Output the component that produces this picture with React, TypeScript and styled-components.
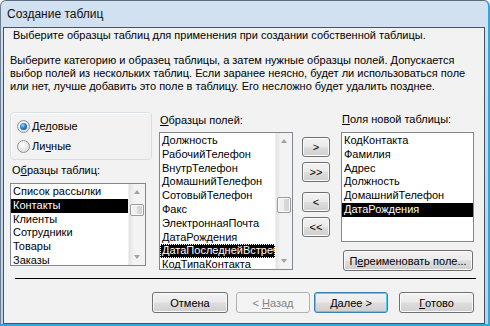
import React from 'react';
import styled, { createGlobalStyle, css } from 'styled-components';

const GlobalStyle = createGlobalStyle`
  html, body {
    margin: 0;
    padding: 0;
    background: #ffffff;
  }
  body {
    font-family: "Liberation Sans", Arial, sans-serif;
    font-size: 11px;
    color: #000;
  }
  * { box-sizing: border-box; }
`;

// Window chrome
const Window = styled.div`
  width: 490px;
  height: 326px;
  display: flex;
  flex-direction: column;
  background: linear-gradient(to bottom, #d3e2f2 0%, #c4d8ee 45%, #b9d1ea 100%);
  border-top: 1px solid #5b6b7c;
  border-left: 1px solid #6e7d8d;
  border-right: 2px solid #2ea8dd;
  border-bottom: 2px solid #2ea8dd;
  border-top-left-radius: 6px;
  border-top-right-radius: 6px;
  padding: 0 3px 0 2px;
  overflow: hidden;
`;

const TitleBar = styled.div`
  height: 26px;
  display: flex;
  align-items: center;
  padding-left: 4px;
  font-size: 12px;
  color: #101010;
`;

const Client = styled.div`
  flex: 1;
  display: flex;
  flex-direction: column;
  background: #f2f2f2;
  border: 1px solid #46525e;
`;

const HeaderText = styled.div`
  padding: 1px 0 0 9px;
  line-height: 13px;
`;

const Description = styled.div`
  margin: 12px 0 0 6px;
  line-height: 13px;
`;

const MainRow = styled.div`
  display: flex;
  align-items: flex-start;
  margin-top: 19px;
  padding-left: 6px;
`;

const Column = styled.div<{ $w: number; $ml?: number }>`
  width: ${p => p.$w}px;
  margin-left: ${p => p.$ml || 0}px;
  display: flex;
  flex-direction: column;
`;

const GroupBox = styled.div`
  height: 48px;
  border: 1px solid #d5dfe5;
  border-radius: 4px;
  box-shadow: inset 1px 1px 0 #ffffff;
  display: flex;
  flex-direction: column;
  justify-content: center;
  gap: 7px;
  padding-left: 6px;
`;

const RadioRow = styled.div`
  display: flex;
  align-items: center;
  gap: 2px;
  line-height: 13px;
`;

const RadioCircle = styled.span<{ $checked?: boolean }>`
  width: 13px;
  height: 13px;
  border-radius: 50%;
  border: 1px solid #8f9194;
  background: radial-gradient(circle at 40% 35%, #ffffff 0%, #e8e8e8 55%, #cfd0d2 100%);
  display: flex;
  align-items: center;
  justify-content: center;
  ${p => p.$checked && css`
    &::after {
      content: '';
      width: 7px;
      height: 7px;
      border-radius: 50%;
      background: radial-gradient(circle at 40% 35%, #9fd8ff 0%, #2a7ec6 45%, #0d3f7e 100%);
    }
  `}
`;

const Label = styled.div<{ $mt?: number; $ml?: number }>`
  margin-top: ${p => p.$mt || 0}px;
  margin-left: ${p => p.$ml || 0}px;
  line-height: 13px;
`;

const ListBox = styled.div<{ $h: number; $w?: number; $mt?: number }>`
  height: ${p => p.$h}px;
  width: ${p => (p.$w ? `${p.$w}px` : 'auto')};
  margin-top: ${p => p.$mt || 0}px;
  border: 1px solid #828790;
  background: #ffffff;
  display: flex;
  overflow: hidden;
`;

const Items = styled.div`
  flex: 1;
  min-width: 0;
  padding-top: 1px;
  overflow: hidden;
`;

const Item = styled.div<{ $selected?: boolean; $focus?: boolean }>`
  height: 13.8px;
  line-height: 13.8px;
  padding-left: 2px;
  white-space: nowrap;
  overflow: hidden;
  ${p => p.$selected && css`
    background: #000000;
    color: #ffffff;
  `}
  ${p => p.$focus && css`
    outline: 1px dotted #ffffff;
    outline-offset: -1px;
  `}
`;

const ScrollBar = styled.div`
  width: 17px;
  flex-shrink: 0;
  background: linear-gradient(to right, #e3e3e3, #f3f3f3 30%, #f3f3f3);
  border-left: 1px solid #f0f0f0;
  display: flex;
  flex-direction: column;
  align-items: center;
`;

const Arrow = styled.div<{ $down?: boolean }>`
  height: 16px;
  width: 100%;
  display: flex;
  align-items: center;
  justify-content: center;
  &::after {
    content: '';
    border-left: 3.5px solid transparent;
    border-right: 3.5px solid transparent;
    ${p => p.$down
      ? css`border-top: 4px solid #a2a2a2;`
      : css`border-bottom: 4px solid #a2a2a2;`}
  }
`;

const Track = styled.div`
  flex: 1;
  width: 100%;
  padding: 0 1px;
`;

const Thumb = styled.div<{ $top: number; $h: number }>`
  margin-top: ${p => p.$top}px;
  height: ${p => p.$h}px;
  border: 1px solid #9a9a9a;
  border-radius: 2px;
  background: linear-gradient(to right, #f4f4f4 0%, #ececec 50%, #dcdcdc 50%, #d0d0d0 100%);
  box-shadow: inset 0 0 0 1px #fbfbfb;
`;

const Button = styled.div<{ $w: number; $h?: number; $mt?: number; $ml?: number; $default?: boolean; $disabled?: boolean }>`
  width: ${p => p.$w}px;
  height: ${p => p.$h || 21}px;
  margin-top: ${p => p.$mt || 0}px;
  margin-left: ${p => p.$ml || 0}px;
  border: 1px solid #707070;
  border-radius: 3px;
  background: linear-gradient(to bottom, #f2f2f2 0%, #ebebeb 48%, #dddddd 52%, #cfcfcf 100%);
  box-shadow: inset 0 0 0 1px #fbfbfb;
  display: flex;
  align-items: center;
  justify-content: center;
  flex-shrink: 0;
  white-space: pre;
  ${p => p.$default && css`
    border-color: #3c7fb1;
    box-shadow: inset 0 0 0 1px #4fd0f7;
  `}
  ${p => p.$disabled && css`
    border-color: #adb2b5;
    background: #f4f4f4;
    box-shadow: none;
    color: #838383;
  `}
`;

const ArrowColumn = styled.div`
  width: 28px;
  margin-left: 9px;
  margin-top: 25px;
  display: flex;
  flex-direction: column;
`;

const Separator = styled.div`
  height: 1px;
  background: #000000;
  margin: 7px 8px 0 11px;
`;

const ButtonRow = styled.div`
  display: flex;
  padding-left: 148px;
  margin-top: 13px;
`;

const tableSamples = ['Список рассылки', 'Контакты', 'Клиенты', 'Сотрудники', 'Товары', 'Заказы'];

const fieldSamples = [
  'Должность',
  'РабочийТелефон',
  'ВнутрТелефон',
  'ДомашнийТелефон',
  'СотовыйТелефон',
  'Факс',
  'ЭлектроннаяПочта',
  'ДатаРождения',
  'ДатаПоследнейВстречи',
  'КодТипаКонтакта',
];

const newFields = ['КодКонтакта', 'Фамилия', 'Адрес', 'Должность', 'ДомашнийТелефон', 'ДатаРождения'];

export default function App() {
  return (
    <>
      <GlobalStyle />
      <Window>
        <TitleBar>Создание таблиц</TitleBar>
        <Client>
          <HeaderText>Выберите образцы таблиц для применения при создании собственной таблицы.</HeaderText>
          <Description>
            Выберите категорию и образец таблицы, а затем нужные образцы полей. Допускается
            <br />
            выбор полей из нескольких таблиц. Если заранее неясно, будет ли использоваться поле
            <br />
            или нет, лучше добавить это поле в таблицу. Его несложно будет удалить позднее.
          </Description>

          <MainRow>
            <Column $w={142}>
              <GroupBox>
                <RadioRow>
                  <RadioCircle $checked />
                  <span>Де<u>л</u>овые</span>
                </RadioRow>
                <RadioRow>
                  <RadioCircle />
                  <span>Ли<u>ч</u>ные</span>
                </RadioRow>
              </GroupBox>
              <Label $mt={4} $ml={2}>О<u>б</u>разцы таблиц:</Label>
              <ListBox $h={83} $w={136} $mt={6}>
                <Items>
                  {tableSamples.map(t => (
                    <Item key={t} $selected={t === 'Контакты'}>{t}</Item>
                  ))}
                </Items>
                <ScrollBar>
                  <Arrow />
                  <Track>
                    <Thumb $top={4} $h={12} />
                  </Track>
                  <Arrow $down />
                </ScrollBar>
              </ListBox>
            </Column>

            <Column $w={134} $ml={7}>
              <Label $mt={2} $ml={1}><u>О</u>бразцы полей:</Label>
              <ListBox $h={138} $mt={5}>
                <Items>
                  {fieldSamples.map(f => (
                    <Item key={f} $selected={f === 'ДатаПоследнейВстречи'} $focus={f === 'ДатаПоследнейВстречи'}>{f}</Item>
                  ))}
                </Items>
                <ScrollBar>
                  <Arrow />
                  <Track>
                    <Thumb $top={48} $h={16} />
                  </Track>
                  <Arrow $down />
                </ScrollBar>
              </ListBox>
            </Column>

            <ArrowColumn>
              <Button $w={28} $h={20}>&gt;</Button>
              <Button $w={28} $h={20} $mt={5}>&gt;&gt;</Button>
              <Button $w={28} $h={20} $mt={10}>&lt;</Button>
              <Button $w={28} $h={20} $mt={5}>&lt;&lt;</Button>
            </ArrowColumn>

            <Column $w={133} $ml={11}>
              <Label $mt={1} $ml={1}><u>П</u>оля новой таблицы:</Label>
              <ListBox $h={110} $mt={6}>
                <Items>
                  {newFields.map(f => (
                    <Item key={f} $selected={f === 'ДатаРождения'}>{f}</Item>
                  ))}
                </Items>
              </ListBox>
              <Button $w={130} $mt={8} $ml={2}>П<u>е</u>реименовать поле...</Button>
            </Column>
          </MainRow>

          <Separator />

          <ButtonRow>
            <Button $w={76}>Отмена</Button>
            <Button $w={74} $ml={8} $disabled>{'< '}<u>Н</u>азад</Button>
            <Button $w={74} $ml={4} $default><u>Д</u>алее{' >'}</Button>
            <Button $w={75} $ml={11}><u>Г</u>отово</Button>
          </ButtonRow>
        </Client>
      </Window>
    </>
  );
}
